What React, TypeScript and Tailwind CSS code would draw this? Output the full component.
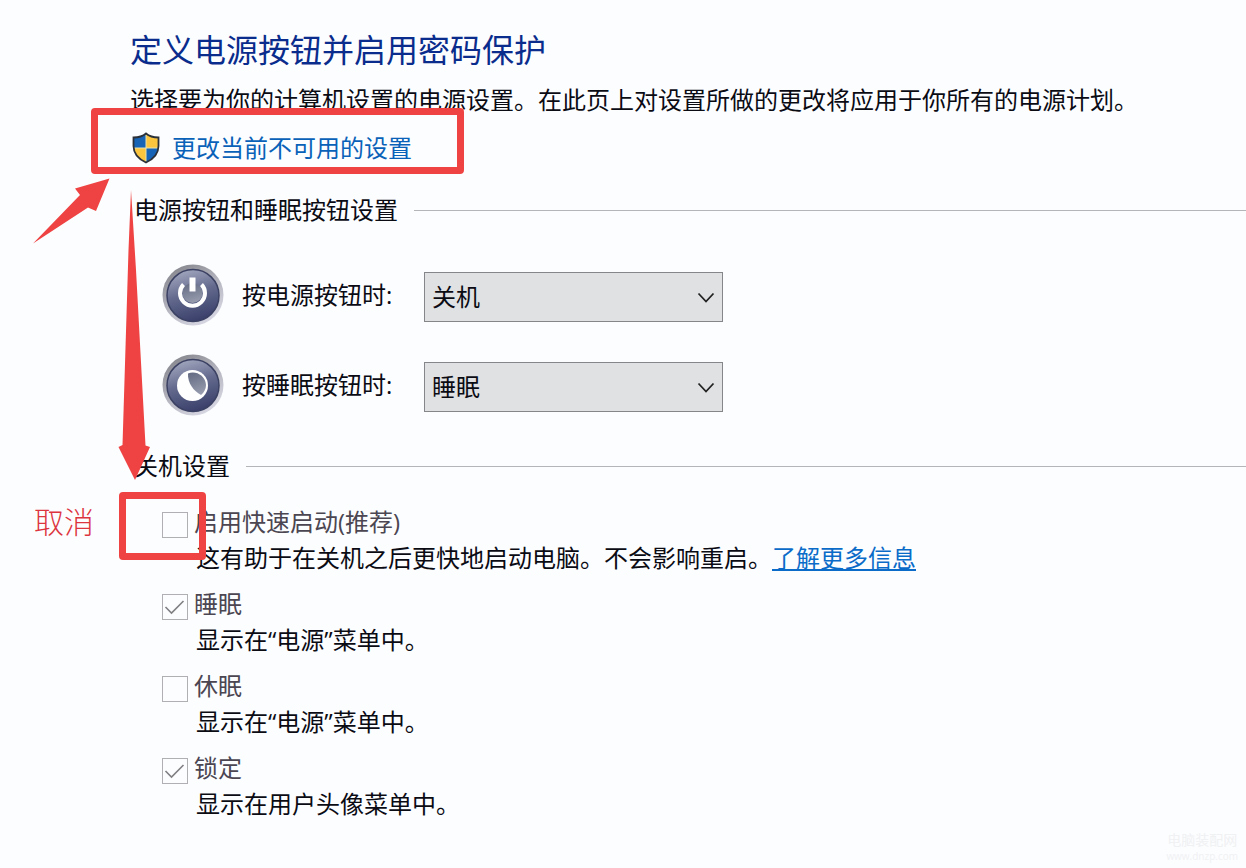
import { useState } from "react";

const shutdownOptions = [
  {
    id: "fast-startup",
    label: "启用快速启动(推荐)",
    description: "这有助于在关机之后更快地启动电脑。不会影响重启。",
    link: "了解更多信息",
    checked: false,
    marked: true,
  },
  {
    id: "sleep-option",
    label: "睡眠",
    description: "显示在“电源”菜单中。",
    checked: true,
  },
  {
    id: "hibernate-option",
    label: "休眠",
    description: "显示在“电源”菜单中。",
    checked: false,
  },
  {
    id: "lock-option",
    label: "锁定",
    description: "显示在用户头像菜单中。",
    checked: true,
  },
];

const actions = ["关机", "睡眠", "休眠", "不采取任何操作"];

function ShieldIcon() {
  return (
    <svg className="h-8 w-7 shrink-0" viewBox="0 0 28 32" aria-hidden="true">
      <defs>
        <clipPath id="shield">
          <path d="M14 1.5C10.5 4.5 6 5.5 1.5 5.5V14C1.5 22 6.5 27 14 30.5C21.5 27 26.5 22 26.5 14V5.5C22 5.5 17.5 4.5 14 1.5Z" />
        </clipPath>
      </defs>
      <g clipPath="url(#shield)">
        <path fill="#1763b5" d="M0 0h14v16H0zM14 16h14v16H14z" />
        <path fill="#fbc53d" d="M14 0h14v16H14zM0 16h14v16H0z" />
        <path stroke="#e9e3b0" strokeWidth="1" d="M14 0v32M0 16h28" />
      </g>
      <path
        fill="none"
        stroke="#2b3138"
        strokeWidth="1.8"
        d="M14 1.5C10.5 4.5 6 5.5 1.5 5.5V14C1.5 22 6.5 27 14 30.5C21.5 27 26.5 22 26.5 14V5.5C22 5.5 17.5 4.5 14 1.5Z"
      />
    </svg>
  );
}

function RoundIcon({ kind }: { kind: "power" | "sleep" }) {
  return (
    <svg
      className="h-[62px] w-[62px] shrink-0"
      viewBox="0 0 62 62"
      aria-hidden="true"
    >
      <defs>
        <linearGradient id={`${kind}-rim`} x1="0.2" y1="0" x2="0.8" y2="1">
          <stop offset="0" stopColor="#85868c" />
          <stop offset="0.5" stopColor="#b4b5bf" />
          <stop offset="1" stopColor="#dcdce8" />
        </linearGradient>
        <linearGradient id={`${kind}-face`} x1="0.3" y1="0" x2="0.6" y2="1">
          <stop offset="0" stopColor="#a3a8bf" />
          <stop offset="0.45" stopColor="#646b8e" />
          <stop offset="1" stopColor="#383e69" />
        </linearGradient>
        <linearGradient id={`${kind}-orb`} x1="0.3" y1="0" x2="0.6" y2="1">
          <stop offset="0" stopColor="#666d84" />
          <stop offset="1" stopColor="#989daf" />
        </linearGradient>
      </defs>
      <circle cx="31" cy="31" r="30.5" fill={`url(#${kind}-rim)`} />
      <circle
        cx="31"
        cy="31.5"
        r="26"
        fill={`url(#${kind}-face)`}
        stroke="#3b4162"
        strokeWidth="1.5"
      />
      {kind === "power" ? (
        <>
          <circle cx="30.5" cy="29" r="10" fill="url(#power-orb)" />
          <path
            d="M21.5 20.5A12.5 12.5 0 1 0 39.5 20.5"
            fill="none"
            stroke="#fff"
            strokeWidth="4"
          />
          <path d="M30.5 13.5v14" stroke="#fff" strokeWidth="6" />
        </>
      ) : (
        <>
          <circle cx="30.5" cy="31.5" r="15.5" fill="#fff" />
          <path
            d="M26 19.5C33 16 43.5 21 44 31C44 35 42 38.5 39 41C31.5 37 25.5 29 26 19.5Z"
            fill="url(#sleep-orb)"
          />
        </>
      )}
    </svg>
  );
}

function SectionHeading({ children }: { children: string }) {
  return (
    <div className="flex items-center gap-4 pl-1">
      <h2 className="text-2xl leading-8">{children}</h2>
      <div className="h-px flex-1 bg-[#b4b5b8]" />
    </div>
  );
}

function ActionRow({
  kind,
  label,
  initial,
}: {
  kind: "power" | "sleep";
  label: string;
  initial: string;
}) {
  const [value, setValue] = useState(initial);
  return (
    <div className="flex items-center">
      <RoundIcon kind={kind} />
      <label htmlFor={kind} className="ml-[18px] w-[182px] text-2xl leading-8">
        {label}
      </label>
      <div className="relative mt-1">
        <select
          id={kind}
          value={value}
          onChange={(e) => setValue(e.target.value)}
          className="block h-[50px] w-[299px] appearance-none border border-[#85868a] bg-[#e0e1e3] pl-[7px] text-2xl leading-8 outline-none"
        >
          {actions.map((action) => (
            <option key={action}>{action}</option>
          ))}
        </select>
        <svg
          className="pointer-events-none absolute top-5 right-2 h-3 w-[18px]"
          viewBox="0 0 18 12"
          fill="none"
          stroke="#222"
          strokeWidth="1.8"
          aria-hidden="true"
        >
          <path d="M1.5 1.5L9 9.5L16.5 1.5" />
        </svg>
      </div>
    </div>
  );
}

export default function App() {
  return (
    <main className="relative min-h-screen overflow-hidden bg-[#fcfdff] pt-[30px] pb-10 pl-[130px] font-['Open_Sans','Noto_Sans_CJK_SC',sans-serif] text-[#0b0b14]">
      <h1 className="text-[32px] leading-10 text-[#0a2c8c]">
        定义电源按钮并启用密码保护
      </h1>
      <p className="mt-3.5 text-2xl leading-8">
        选择要为你的计算机设置的电源设置。在此页上对设置所做的更改将应用于你所有的电源计划。
      </p>
      <div className="relative mt-4 w-fit">
        <a
          href="#settings"
          className="flex items-center gap-3 pl-0.5 text-2xl leading-8 text-[#0a62b8]"
        >
          <ShieldIcon />
          更改当前不可用的设置
        </a>
        <div className="pointer-events-none absolute -top-6 -right-[52px] -bottom-2.5 -left-[39px] rounded border-7 border-[#ee4342]" />
      </div>

      <section id="settings" className="mt-[30px]">
        <SectionHeading>电源按钮和睡眠按钮设置</SectionHeading>
        <div className="mt-[38px] flex flex-col gap-7 pl-8">
          <ActionRow kind="power" label="按电源按钮时:" initial="关机" />
          <ActionRow kind="sleep" label="按睡眠按钮时:" initial="睡眠" />
        </div>
      </section>

      <section className="mt-[34px]">
        <SectionHeading>关机设置</SectionHeading>
        <div className="mt-6 flex flex-col gap-3.5 pl-8">
          {shutdownOptions.map((option) => (
            <div key={option.id}>
              <div className="flex items-end gap-1.5">
                <div className="relative h-[26px] w-[26px]">
                  <input
                    id={option.id}
                    type="checkbox"
                    defaultChecked={option.checked}
                    disabled
                    className="block h-full w-full appearance-none border border-[#b0b0b4] bg-transparent"
                  />
                  {option.checked && (
                    <svg
                      className="pointer-events-none absolute inset-0"
                      viewBox="0 0 26 26"
                      fill="none"
                      stroke="#808084"
                      strokeWidth="1.6"
                      aria-hidden="true"
                    >
                      <path d="M3.5 13L9.5 19L21.5 7" />
                    </svg>
                  )}
                  {option.marked && (
                    <div className="pointer-events-none absolute -top-5 -right-[18px] -bottom-[22px] -left-[43px] z-10 rounded border-7 border-[#ee4342]" />
                  )}
                </div>
                <label
                  htmlFor={option.id}
                  className="text-2xl leading-8 text-[#4b4651]"
                >
                  {option.label}
                </label>
              </div>
              <p className="mt-1 pl-[34px] text-2xl leading-8">
                {option.description}
                {option.link && (
                  <a
                    href="#more"
                    className="text-[#0a6cc8] underline underline-offset-2"
                  >
                    {option.link}
                  </a>
                )}
              </p>
            </div>
          ))}
        </div>
      </section>

      {/* red arrows and note */}
      <svg
        className="pointer-events-none absolute top-0 left-0 h-[500px] w-[160px]"
        viewBox="0 0 160 500"
        fill="#ee4342"
        aria-hidden="true"
      >
        <path d="M109.500 178.500L75 188.500L80 195L33 243.500L88 207.500L96 211Z" />
        <path d="M131 190L128.5 250L122.5 445L118.5 447L135 480L150 447L145.5 445.5L136 270Z" />
      </svg>
      <span className="absolute top-[502px] left-[34px] text-3xl leading-10 font-light text-[#dc3540]">
        取消
      </span>

      <div className="absolute right-2 bottom-1 text-center text-sm leading-4 text-[#f0f1f3]">
        <div>电脑装配网</div>
        <div className="text-[10px]">www.dnzp.com</div>
      </div>
    </main>
  );
}
